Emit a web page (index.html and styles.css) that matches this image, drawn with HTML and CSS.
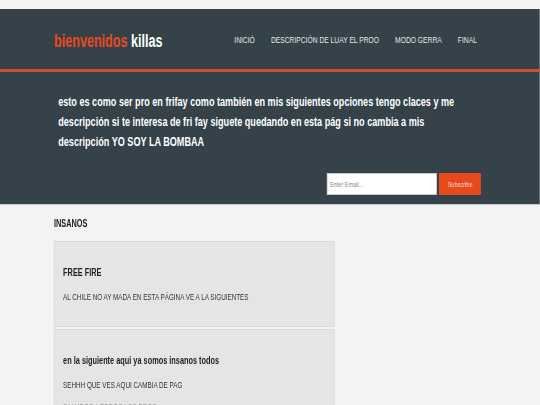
FILE: index.html
```
<!DOCTYPE html>
<html lang="es">
<head>
<meta charset="utf-8">
<title>bienvenidos killas</title>
<link rel="stylesheet" href="styles.css">
</head>
<body>
<div class="page">
  <header class="site-header">
    <div class="container header-inner">
      <div class="brand"><span class="highlight">bienvenidos</span> killas</div>
      <nav class="nav">
        <a href="#">Inició</a>
        <a href="#">Descripción de luay el proo</a>
        <a href="#">Modo gerra</a>
        <a href="#">Final</a>
      </nav>
    </div>
  </header>
  <section class="newsletter">
    <div class="container">
      <p class="intro">esto es como ser pro en frifay como también en mis siguientes opciones tengo claces y me<br>descripción si te interesa de fri fay siguete quedando en esta pág si no cambia a mis<br>descripción YO SOY LA BOMBAA</p>
      <form class="subscribe">
        <input type="email" class="email" placeholder="Enter Email...">
        <button type="button" class="button">Subscribe</button>
      </form>
    </div>
  </section>
  <main class="container main">
    <div class="main-col">
      <h1 class="page-title">INSANOS</h1>
      <ul class="services">
        <li class="card">
          <h3>FREE FIRE</h3>
          <p>AL CHILE NO AY MADA EN ESTA PÁGINA VE A LA SIGUIENTES</p>
        </li>
        <li class="card">
          <h3>en la siguiente aqui ya somos insanos todos</h3>
          <p>SEHHH QUE VES AQUI CAMBIA DE PAG</p>
          <p class="muted">SALUDOS A TODOS LOS PROS</p>
        </li>
      </ul>
    </div>
  </main>
</div>
</body>
</html>
```
FILE: styles.css
```
* { box-sizing: border-box; }
html, body { margin: 0; padding: 0; overflow: hidden; }
body {
  background: #f3f3f3;
  font-family: "Liberation Sans", Arial, Helvetica, sans-serif;
  color: #333;
}
/* the reference is a wide page squeezed horizontally */
.page {
  width: 771.43px;
  padding-top: 9px;
  transform: scaleX(0.7);
  transform-origin: 0 0;
}
.container { width: 80%; margin: 0 auto; }

.site-header {
  background: #35424a;
  border-bottom: 3px solid #d04e2c;
  color: #fff;
}
.header-inner {
  height: 60px;
  display: flex;
  align-items: center;
  justify-content: space-between;
}
.brand {
  font-size: 18px;
  font-weight: bold;
  line-height: 20px;
  padding-top: 3px;
  white-space: nowrap;
}
.highlight { color: #e8491d; }
.nav {
  display: flex;
  gap: 23px;
  padding: 1px 13px 0 0;
  white-space: nowrap;
}
.nav a {
  color: #e6e6e6;
  text-decoration: none;
  text-transform: uppercase;
  font-size: 9.6px;
  line-height: 12px;
}

.newsletter {
  background: #35424a;
  color: #fff;
  padding: 20px 0 9px;
  border-bottom: 1px solid #c9cbcc;
}
.intro {
  margin: 0;
  padding-left: 6px;
  font-size: 13px;
  font-weight: bold;
  line-height: 20px;
  white-space: nowrap;
}
.subscribe {
  margin: 21px 7px 0 0;
  display: flex;
  justify-content: flex-end;
  gap: 3px;
}
.email {
  width: 157px;
  height: 22px;
  margin: 0;
  padding: 0 3px;
  border: 1px solid #c8c8c8;
  background: #fff;
  font-family: inherit;
  font-size: 8px;
  color: #333;
}
.email::placeholder { color: #8a8a8a; }
.button {
  width: 60px;
  height: 22px;
  margin: 0;
  padding: 0;
  border: 0;
  background: #e8491d;
  color: #fcd8cd;
  font-family: inherit;
  font-size: 8px;
}

.main-col { width: 65%; }
.page-title {
  margin: 11px 0;
  font-size: 10.5px;
  line-height: 14px;
  font-weight: bold;
  color: #222;
}
.services { list-style: none; margin: 0; padding: 0; }
.card {
  background: #e5e5e5;
  border: 1px solid #d8d8d8;
  padding: 23px 12px 22px;
  margin-bottom: 2px;
}
.card h3 {
  margin: 0;
  font-size: 10.5px;
  line-height: 14px;
  font-weight: bold;
  color: #222;
  white-space: nowrap;
}
.card p {
  margin: 11px 0 0;
  font-size: 9px;
  line-height: 14px;
  color: #333;
  white-space: nowrap;
}
.card p.muted { margin-top: 8px; color: #9a9a9a; }
```
